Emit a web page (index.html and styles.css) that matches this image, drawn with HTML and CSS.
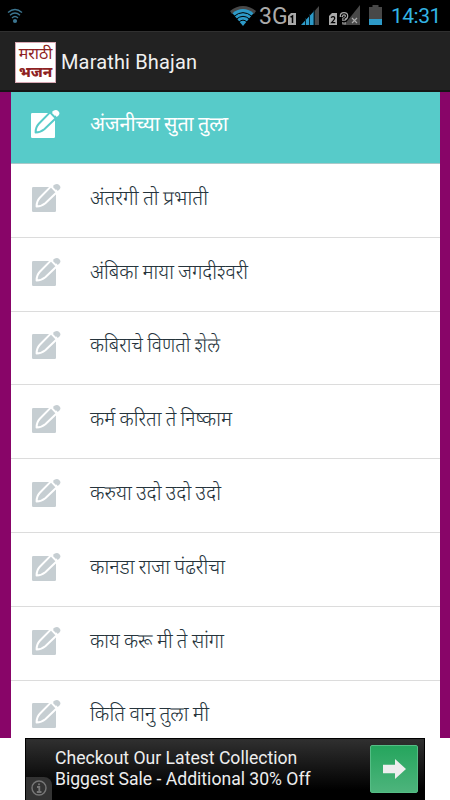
FILE: index.html
```html
<!DOCTYPE html>
<html lang="mr">
<head>
<meta charset="utf-8">
<title>Marathi Bhajan</title>
<link rel="stylesheet" href="styles.css">
</head>
<body>
<svg width="0" height="0" class="defs">
  <symbol id="edit" viewBox="0 0 30 30">
    <rect x="1" y="4" width="24" height="25" rx="1.2"/>
    <path class="pencil" d="M20 3.4L25.8 9.2L14.3 20.2Q10.5 23.4 5.6 23.5Q5.6 18.2 8.8 14.8Z"/>
    <path d="M21.8 3L23.8 1.6C25.6 .6 27 .9 28.4 2.3C29.7 3.7 29.8 5 28.6 6.3L26.8 7.9Z"/>
  </symbol>
</svg>
<header class="status">
  <svg class="hotspot" width="16" height="16" viewBox="0 0 16 16"><g fill="none" stroke="#3c7590" stroke-width="1.4"><path d="M1 4.5Q8-1.7 15 4.5M3 7.3Q8 2.8 13 7.3M5 10Q8 7.2 11 10"/></g><circle cx="8" cy="13" r="2.1" fill="#3c7590"/></svg>
  <svg class="wifi" width="26" height="20" viewBox="0 0 26 20"><path d="M0 5Q13-5 26 5L24 8Q13 0 2 8Z" fill="#484848"/><path d="M2.5 7.2Q13-1 23.5 7.2L13 20Z" fill="#2d9ac8"/><path d="M4 10.3Q13 3 22 10.3M6.5 13Q13 7.7 19.5 13M9 16Q13 12.3 17 16" fill="none" stroke="#000" stroke-width="1"/></svg>
  <span class="net">3G</span>
  <svg class="sim" width="8" height="12" viewBox="0 0 8 12"><path d="M3 0H8V12H0V3Z" fill="#aaa"/><path d="M2.5 4.2L4.5 3V10" fill="none" stroke="#000" stroke-width="1.5"/></svg>
  <svg class="signal" width="18" height="19" viewBox="0 0 18 19"><path d="M0 19L13.2 5V19Z" fill="#2d9ac8"/><path d="M14 4.5L18 0V19H14Z" fill="#484848"/><path d="M4.5 12V19M8.5 8V19M13 4V19" stroke="#07232e"/></svg>
  <svg class="sim2" width="31" height="20" viewBox="0 0 31 20"><path d="M3 8H8V20H0V11Z" fill="#aaa"/><path d="M2 12.6Q4 10.8 5.6 12.3Q6.3 13.6 4.6 15.3L2.5 17.7H6.3" fill="none" stroke="#000" stroke-width="1.2"/><path d="M31 0V20H15Z" fill="#484848"/><path d="M12.4 12V11Q12.4 8.8 15 8.8T17.6 11T15 14V16M15 17V19.5" fill="none" stroke="#aaa" stroke-width="3.4"/><path d="M12.4 11.6Q12.4 8.8 15 8.8Q17.6 8.8 17.6 11Q17.6 12.4 15 13.5V15.5M15 17V18.5" fill="none" stroke="#000" stroke-width="1.1"/><path d="M23 13L28 18M28 13L23 18" stroke="#aaa" stroke-width="1.2"/></svg>
  <svg class="battery" width="13" height="20" viewBox="0 0 13 20"><path d="M0 2H3.5V0H9.5V2H13V14H0Z" fill="#484848"/><path d="M0 14H13V20H0Z" fill="#2d9ac8"/></svg>
  <span class="clock">14:31</span>
</header>
<div class="bar">
  <div class="logo"><span class="l1">मराठी</span><span class="l2">भजन</span></div>
  <h1>Marathi Bhajan</h1>
</div>
<main>
  <ul>
    <li class="on"><svg class="icon"><use href="#edit"/></svg><svg class="name"><text y="27" textLength="138" lengthAdjust="spacingAndGlyphs">अंजनीच्या सुता तुला</text></svg></li>
    <li><svg class="icon"><use href="#edit"/></svg><svg class="name"><text y="27" textLength="118" lengthAdjust="spacingAndGlyphs">अंतरंगी तो प्रभाती</text></svg></li>
    <li><svg class="icon"><use href="#edit"/></svg><svg class="name"><text y="27" textLength="158" lengthAdjust="spacingAndGlyphs">अंबिका माया जगदीश्‍वरी</text></svg></li>
    <li><svg class="icon"><use href="#edit"/></svg><svg class="name"><text y="27" textLength="130" lengthAdjust="spacingAndGlyphs">कबिराचे विणतो शेले</text></svg></li>
    <li><svg class="icon"><use href="#edit"/></svg><svg class="name"><text y="27" textLength="142" lengthAdjust="spacingAndGlyphs">कर्म करिता ते निष्काम</text></svg></li>
    <li><svg class="icon"><use href="#edit"/></svg><svg class="name"><text y="27" textLength="131" lengthAdjust="spacingAndGlyphs">करुया उदो उदो उदो</text></svg></li>
    <li><svg class="icon"><use href="#edit"/></svg><svg class="name"><text y="27" textLength="135" lengthAdjust="spacingAndGlyphs">कानडा राजा पंढरीचा</text></svg></li>
    <li><svg class="icon"><use href="#edit"/></svg><svg class="name"><text y="27" textLength="134" lengthAdjust="spacingAndGlyphs">काय करू मी ते सांगा</text></svg></li>
    <li><svg class="icon"><use href="#edit"/></svg><svg class="name"><text y="27" textLength="119" lengthAdjust="spacingAndGlyphs">किति वानु तुला मी</text></svg></li>
  </ul>
</main>
<footer>
  <div class="ad">
    <div class="info"><svg width="16" height="16" viewBox="0 0 16 16"><circle cx="8" cy="8" r="7" fill="none" stroke="#777" stroke-width="1.4"/><path d="M8 3.5V5.3M6 7H8.3V12M5.8 12H10.5" fill="none" stroke="#777" stroke-width="1.8"/></svg></div>
    <p>Checkout Our Latest Collection<br>Biggest Sale - Additional 30% Off</p>
    <div class="go"><svg width="23" height="20" viewBox="0 0 23 20"><path d="M0 5.7H12V0L23 10L12 20V14.3H0Z" fill="#eee"/></svg></div>
  </div>
</footer>
</body>
</html>
```

FILE: styles.css
```css
* { box-sizing: border-box; }
body { margin: 0; width: 450px; height: 800px; overflow: hidden; background: #fff; font-family: Roboto, "Noto Sans Devanagari", "Noto Sans", sans-serif; display: flex; flex-direction: column; }
.defs { position: absolute; }
.status { height: 31px; flex: none; background: #000; display: flex; align-items: flex-start; color: #aaa; }
.status svg { flex: none; }
.hotspot { margin: 8px 0 0 7px; }
.wifi { margin: 6px 0 0 207px; }
.net { width: 32px; margin-left: 3px; font-size: 23px; line-height: 33px; }
.sim { margin: 13px 0 0 -3px; }
.signal { margin: 6px 0 0 5px; }
.sim2 { margin: 5px 0 0 10px; }
.battery { margin: 5px 0 0 9px; }
.clock { margin-left: 9px; font-size: 21px; line-height: 33px; color: #33b5e5; letter-spacing: -.5px; }
.bar { height: 61px; flex: none; background: #222; border-top: 1px solid #303030; border-bottom: 2px solid #151515; display: flex; align-items: center; padding: 2px 0 0 15px; color: #f0f0f0; }
.logo { width: 41px; height: 41px; background: #fff; border: 1px solid #d9a9b4; display: flex; flex-direction: column; align-items: center; color: #8e2222; overflow: hidden; }
.l1 { font-size: 16px; line-height: 21px; }
.l2 { font-size: 15px; line-height: 17px; font-weight: 800; }
h1 { margin: 0 0 0 5px; font-size: 20px; font-weight: 400; letter-spacing: .15px; }
main { height: 646px; flex: none; background: #880568; padding: 0 10px 0 11px; overflow: hidden; }
ul { margin: 0; padding: 0; list-style: none; background: #fff; }
li { --row: #fff; height: 73.8px; background: var(--row); border-bottom: 1.5px solid #dcdcdc; display: flex; align-items: center; color: #26343c; padding-bottom: 5px; }
.icon { width: 30px; height: 30px; margin-left: 20px; margin-right: 29px; fill: #c6ced2; flex: none; }
.pencil { stroke: var(--row); stroke-width: 2; stroke-linejoin: round; }
.name { width: 180px; height: 40px; fill: currentColor; font-size: 20px; font-weight: 300; word-spacing: -.5px; overflow: visible; }
.on { --row: #57cbc9; height: 72px; color: #fff; border-color: #aac9c9; padding-bottom: 7px; }
.on .icon { fill: #fff; margin-left: 19px; margin-right: 30px; }
.on .name { font-weight: 400; }
footer { height: 62px; display: flex; justify-content: center; align-items: flex-start; }
.ad { position: relative; width: 400px; height: 62px; background: linear-gradient(#303030, #000 85%); border: 1px solid #000; display: flex; justify-content: space-between; padding: 0 6px 0 29px; color: #eee; }
.ad p { margin: 9px 0 0; font-size: 17.6px; line-height: 21px; }
.info { position: absolute; left: 0; bottom: -1px; width: 26px; height: 23px; background: #333; border-top-right-radius: 8px; padding: 3px 0 0 5px; }
.go { width: 48px; height: 48px; margin-top: 6px; background: linear-gradient(#25a55d, #4db47c); border: 1px solid #55bd85; border-radius: 2px; display: flex; align-items: center; justify-content: center; }
```
